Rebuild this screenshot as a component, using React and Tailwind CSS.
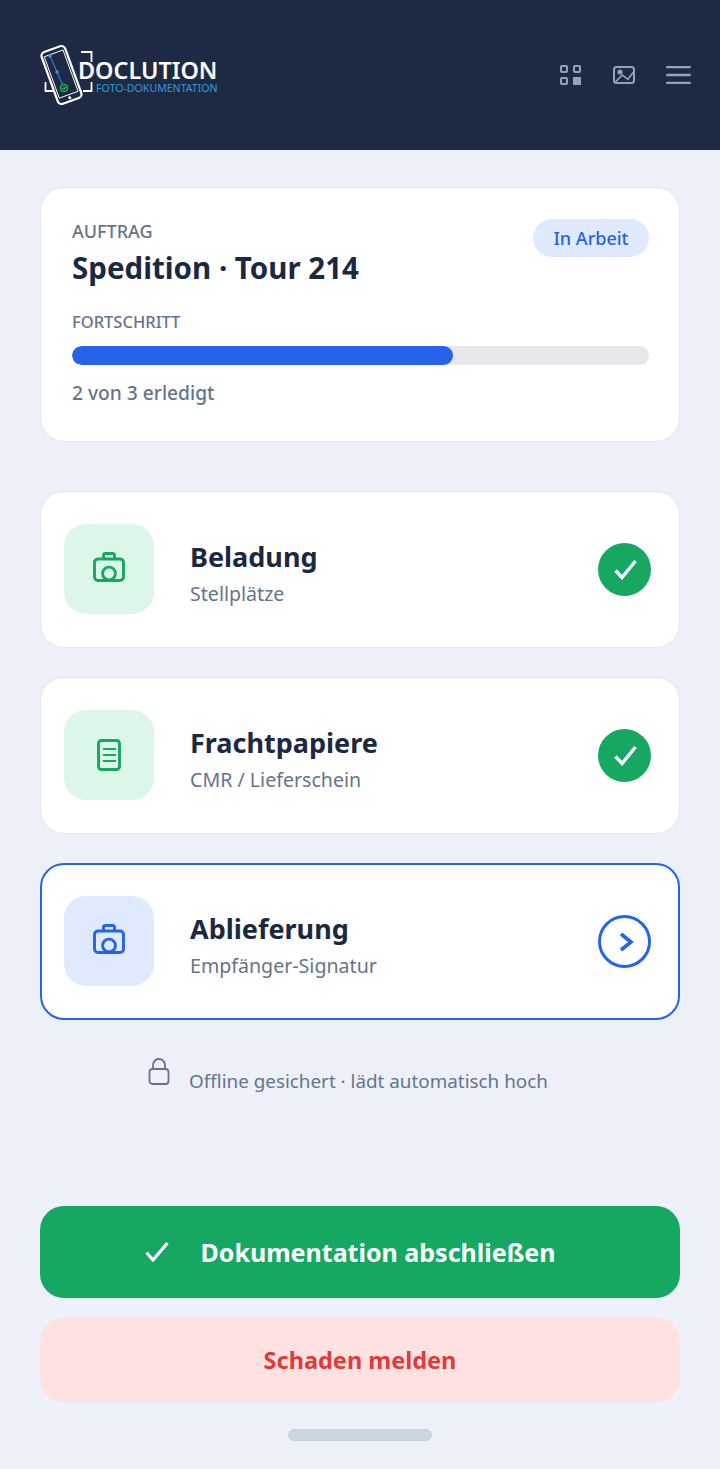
const Logo = () => (
  <div className="flex items-center">
    <svg width="60" height="60" viewBox="0 0 60 60" fill="none" className="shrink-0">
      {/* viewfinder corners */}
      <path d="M45 7H55.5V17" stroke="#fff" strokeWidth="1.8" />
      <path d="M9.5 37V46H19" stroke="#fff" strokeWidth="1.8" />
      <path d="M47 46H55.5V37" stroke="#fff" strokeWidth="1.8" />
      {/* phone */}
      <g transform="rotate(-20 25.5 30)">
        <rect x="13" y="2.5" width="25" height="55" rx="4" fill="#1e2a44" stroke="#fff" strokeWidth="2.2" />
        <path d="M15.5 7H35.5V51H15.5Z" stroke="#fff" strokeWidth="0.9" />
        <circle cx="25.5" cy="54.2" r="1.5" fill="#fff" />
      </g>
      <path d="M14 11L21 27L28 43" stroke="#3498db" strokeWidth="1" />
      <circle cx="14" cy="11" r="1.7" fill="#3498db" />
      <circle cx="21" cy="27" r="1.7" fill="#3498db" />
      <circle cx="28" cy="43" r="3.8" fill="#14532d" stroke="#22c55e" strokeWidth="1" />
      <path d="M26.2 43l1.4 1.5 2.6-3" stroke="#4ade80" strokeWidth="1" />
    </svg>
    <div className="-ml-[18px] mt-[3px] flex flex-col">
      <span className="text-[23.4px] font-semibold leading-[23px] text-white">DOCLUTION</span>
      <span className="ml-[18px] text-[10.6px] leading-[12px] text-[#3498db]">FOTO-DOKUMENTATION</span>
    </div>
  </div>
);

const HeaderIcons = () => (
  <div className="flex items-center gap-[31px]">
    <svg width="21" height="20" viewBox="0 0 21 20" fill="none" stroke="#94a3b8" strokeWidth="2" className="mr-px">
      <rect x="1" y="1" width="6" height="6" rx="1" />
      <rect x="14" y="1" width="6" height="6" rx="1" />
      <rect x="1" y="13" width="6" height="6" rx="1" />
      <rect x="13" y="12" width="8" height="8" fill="#94a3b8" stroke="none" />
    </svg>
    <svg width="22" height="18" viewBox="0 0 22 18" fill="none" stroke="#94a3b8" strokeWidth="2">
      <rect x="1" y="1" width="20" height="16" rx="2.5" />
      <circle cx="7" cy="6" r="2.6" fill="#94a3b8" stroke="none" />
      <path d="M2.7 15.6L9.3 9L15 13.3L20.7 5.7" strokeWidth="1.6" />
    </svg>
    <svg width="25" height="18" viewBox="0 0 25 18" fill="none" stroke="#94a3b8" strokeWidth="2.4" strokeLinecap="round">
      <path d="M1.2 1H23.8M1.2 9H23.8M1.2 17H23.8" />
    </svg>
  </div>
);

const CameraIcon = ({ color }) => (
  <svg width="32" height="30" viewBox="0 0 32 30" fill="none" stroke={color} strokeWidth="2.9" strokeLinejoin="round" className="mb-[4px]">
    <rect x="1.5" y="7" width="29" height="21.5" rx="3.5" />
    <path d="M10.5 7V3.5a2 2 0 0 1 2-2h7a2 2 0 0 1 2 2V7" />
    <circle cx="16" cy="21.5" r="6.4" />
  </svg>
);

const DocIcon = ({ color }) => (
  <svg width="24" height="32" viewBox="0 0 24 32" fill="none" stroke={color} strokeWidth="2.9">
    <rect x="1.5" y="1.5" width="21" height="29" rx="3" />
    <path d="M6 10H19M6 16H19M6 22H19" strokeWidth="2" />
  </svg>
);

const TaskCard = ({ title, sub, tile, icon, active }) => (
  <div
    className={`flex h-[157px] items-center rounded-[24px] bg-white ${
      active ? "border-2 border-[#2563eb] pl-[22px] pr-[27px]" : "border border-[#e2e8f0] pl-[23px] pr-[28px]"
    }`}
  >
    <div className={`mb-[2px] flex h-[90px] w-[90px] shrink-0 items-center justify-center rounded-[22px] ${tile}`}>
      {icon}
    </div>
    <div className="ml-9 flex-1 pt-[6px]">
      <div className="text-[27px] font-bold leading-[36px] text-[#1b2842]">{title}</div>
      <div className="mt-[6px] text-[19.6px] leading-[26px] text-[#64748b]">{sub}</div>
    </div>
    {active ? (
      <div className="flex h-[53px] w-[53px] items-center justify-center rounded-full border-[3px] border-[#2563eb]">
        <svg width="18" height="22" viewBox="0 0 18 22" fill="none" stroke="#2563eb" strokeWidth="3.6">
          <path d="M5 3l10 8-10 8" />
        </svg>
      </div>
    ) : (
      <div className="flex h-[53px] w-[53px] items-center justify-center rounded-full bg-[#16a862]">
        <svg width="26" height="24" viewBox="0 0 26 24" fill="none" stroke="#fff" strokeWidth="3.4">
          <path d="M3.5 12.5l6.5 7L23.5 3" />
        </svg>
      </div>
    )}
  </div>
);

export default function App() {
  return (
    <div className="flex h-[1469px] w-[720px] flex-col bg-[#edf0f8] font-['Noto_Sans',sans-serif]">
      <header className="flex h-[150px] items-center justify-between bg-[#1e2a44] pl-[36px] pr-[29px]">
        <Logo />
        <HeaderIcons />
      </header>

      <main className="flex flex-1 flex-col px-10 pt-[37px]">
        <section className="relative h-[255px] rounded-[24px] border border-[#e2e8f0] bg-white pl-[31px] pr-[30px] pt-[30px]">
          <span className="absolute right-[30px] top-[31px] flex h-[38px] w-[116px] items-center justify-center rounded-full bg-[#dfeafe] text-[18px] font-medium text-[#2563eb]">
            In Arbeit
          </span>
          <div className="text-[18px] font-medium leading-[26px] text-[#64748b]">AUFTRAG</div>
          <h1 className="mt-[4px] text-[29.5px] font-bold leading-[40px] text-[#1b2842]">Spedition · Tour 214</h1>
          <div className="mt-[22px] text-[16.5px] font-medium leading-[24px] text-[#64748b]">FORTSCHRITT</div>
          <div className="mt-[12px] h-[19px] w-full overflow-hidden rounded-full bg-[#e5e7eb]">
            <div className="h-full w-[66%] rounded-full bg-[#2563eb]" />
          </div>
          <div className="mt-[15px] text-[19.2px] font-medium leading-[26px] text-[#64748b]">2 von 3 erledigt</div>
        </section>

        <div className="mt-[49px] flex flex-col gap-[29px]">
          <TaskCard title="Beladung" sub="Stellplätze" tile="bg-[#dcf7e7]" icon={<CameraIcon color="#16a862" />} />
          <TaskCard title="Frachtpapiere" sub="CMR / Lieferschein" tile="bg-[#dcf7e7]" icon={<DocIcon color="#16a862" />} />
          <TaskCard title="Ablieferung" sub="Empfänger-Signatur" tile="bg-[#dfeafe]" icon={<CameraIcon color="#2563eb" />} active />
        </div>

        <div className="mt-[38px] flex items-end justify-center gap-[19px] pr-[24px]">
          <svg width="22" height="28" viewBox="0 0 22 28" fill="none" stroke="#64748b" strokeWidth="1.8" className="mb-[8px]">
            <rect x="1.5" y="11" width="19" height="15" rx="3" />
            <path d="M5 11V7a6 6 0 0 1 12 0v4" />
          </svg>
          <span className="text-[18.85px] leading-[26px] text-[#64748b]">Offline gesichert · lädt automatisch hoch</span>
        </div>

        <button className="mt-[112px] flex h-[92px] w-full items-center justify-center gap-[32px] rounded-[24px] bg-[#16a862] pr-[20px] pt-[2px] text-[25px] font-bold text-white">
          <svg width="24" height="20" viewBox="0 0 24 20" fill="none" stroke="#fff" strokeWidth="3.2" className="-mt-[2px]">
            <path d="M1.5 10.5l6.5 7.5L22.5 1" />
          </svg>
          Dokumentation abschließen
        </button>
        <button className="mt-[20px] flex h-[84px] w-full items-center justify-center rounded-[24px] bg-[#fee2e2] pt-[2px] text-[23.5px] font-bold text-[#dc3c3c]">
          Schaden melden
        </button>
        <div className="mx-auto mt-[27px] h-[12px] w-[144px] rounded-full bg-[#cbd5e1]" />
      </main>
    </div>
  );
}
